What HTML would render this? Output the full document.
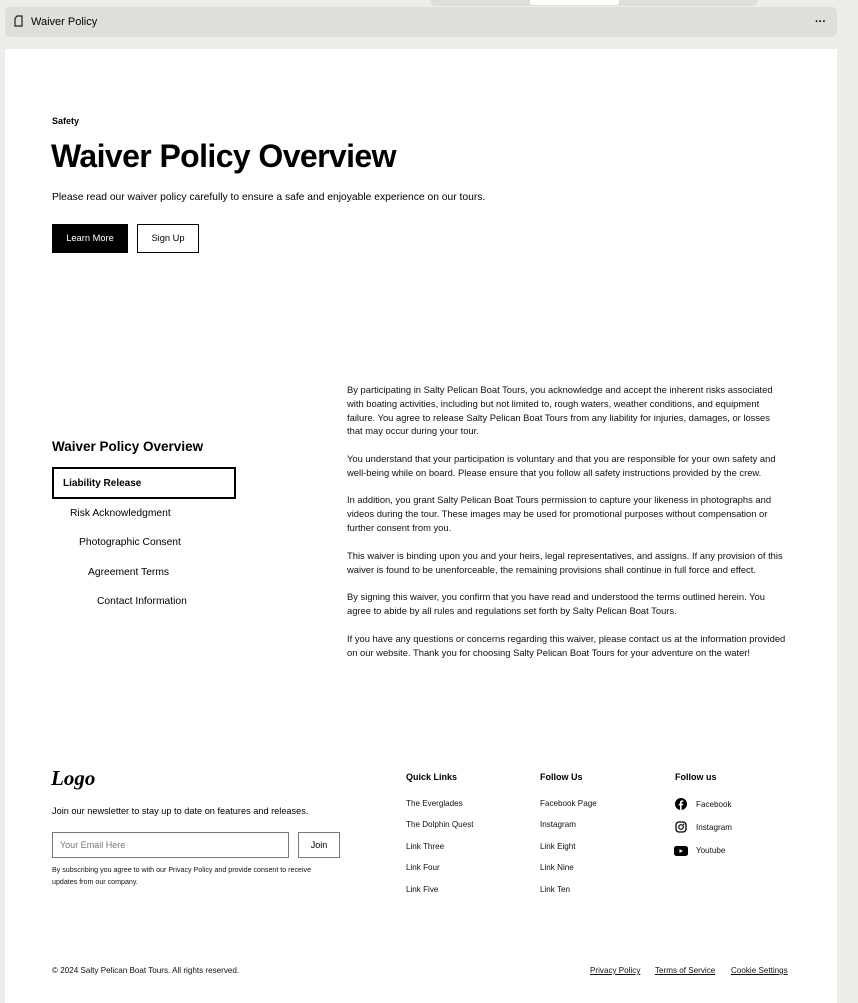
<!DOCTYPE html>
<html><head><meta charset="utf-8"><style>
*{margin:0;padding:0;box-sizing:border-box}
body{width:858px;height:1003px;background:#eeede9;font-family:"Liberation Sans",Arial,sans-serif;color:#000;position:relative;overflow:hidden}
.a{position:absolute;white-space:nowrap}
.bar{position:absolute;left:5px;top:7px;width:832px;height:30px;background:#dfdedb;border-radius:5px}
.tab{position:absolute;left:431px;top:0;width:326px;height:6px;background:#dfdedb;border-radius:0 0 4px 4px}
.tabw{position:absolute;left:530px;top:0;width:89px;height:5px;background:#fff;border-radius:0 0 3px 3px}
.panel{position:absolute;left:5px;top:49px;width:832px;height:954px;background:#fff}
.p{position:absolute;left:347px;width:441px;font-size:9.4px;line-height:13.8px;color:#111}
.f{font-size:8.1px;color:#111}
</style></head><body>
<div class="tab"></div><div class="tabw"></div>
<div class="bar"></div>
<svg class="a" style="left:14px;top:15px" width="9" height="12" viewBox="0 0 9 12"><path d="M3 1h5v10H1V3.5L3 1z" fill="none" stroke="#222" stroke-width="1.2"/></svg>
<div class="a" style="left:31px;top:16px;font-size:11px">Waiver Policy</div>
<div class="a" style="left:815px;top:17px;font-size:11px;font-weight:bold;line-height:11px">···</div>
<div class="panel"></div>

<div class="a" style="left:52px;top:116px;font-size:9px;font-weight:bold">Safety</div>
<div class="a" style="left:51px;top:138px;font-size:32px;font-weight:bold;letter-spacing:-0.6px">Waiver Policy Overview</div>
<div class="a" style="left:52px;top:192px;font-size:10.3px">Please read our waiver policy carefully to ensure a safe and enjoyable experience on our tours.</div>
<div class="a" style="left:52px;top:224px;width:76px;height:29px;background:#000;color:#fff;font-size:9.3px;text-align:center;line-height:29px">Learn More</div>
<div class="a" style="left:137px;top:224px;width:62px;height:29px;border:1px solid #000;font-size:9.3px;text-align:center;line-height:27px">Sign Up</div>

<div class="a" style="left:52px;top:439px;font-size:13.5px;font-weight:bold">Waiver Policy Overview</div>
<div class="a" style="left:52px;top:467px;width:184px;height:32px;border:2px solid #000;font-size:10px;font-weight:bold;line-height:29px;padding-left:9px">Liability Release</div>
<div class="a" style="left:70px;top:508px;font-size:10.3px">Risk Acknowledgment</div>
<div class="a" style="left:79px;top:537px;font-size:10.3px">Photographic Consent</div>
<div class="a" style="left:88px;top:567px;font-size:10.3px">Agreement Terms</div>
<div class="a" style="left:97px;top:596px;font-size:10.3px">Contact Information</div>

<div class="p" style="top:383px">By participating in Salty Pelican Boat Tours, you acknowledge and accept the inherent risks associated with boating activities, including but not limited to, rough waters, weather conditions, and equipment failure. You agree to release Salty Pelican Boat Tours from any liability for injuries, damages, or losses that may occur during your tour.</div>
<div class="p" style="top:452px">You understand that your participation is voluntary and that you are responsible for your own safety and well-being while on board. Please ensure that you follow all safety instructions provided by the crew.</div>
<div class="p" style="top:493px">In addition, you grant Salty Pelican Boat Tours permission to capture your likeness in photographs and videos during the tour. These images may be used for promotional purposes without compensation or further consent from you.</div>
<div class="p" style="top:549px">This waiver is binding upon you and your heirs, legal representatives, and assigns. If any provision of this waiver is found to be unenforceable, the remaining provisions shall continue in full force and effect.</div>
<div class="p" style="top:590px">By signing this waiver, you confirm that you have read and understood the terms outlined herein. You agree to abide by all rules and regulations set forth by Salty Pelican Boat Tours.</div>
<div class="p" style="top:632px">If you have any questions or concerns regarding this waiver, please contact us at the information provided on our website. Thank you for choosing Salty Pelican Boat Tours for your adventure on the water!</div>

<div class="a" style="left:51px;top:766px;font-size:21px;font-style:italic;font-family:'Liberation Serif',serif;font-weight:bold">Logo</div>
<div class="a" style="left:52px;top:806px;font-size:9.2px">Join our newsletter to stay up to date on features and releases.</div>
<div class="a" style="left:52px;top:832px;width:237px;height:26px;border:1px solid #777;font-size:9px;color:#777;line-height:24px;padding-left:7px">Your Email Here</div>
<div class="a" style="left:298px;top:832px;width:42px;height:26px;border:1px solid #777;font-size:9px;text-align:center;line-height:24px">Join</div>
<div class="a f" style="left:52px;top:865px;font-size:7.1px;line-height:11.5px">By subscribing you agree to with our Privacy Policy and provide consent to receive<br>updates from our company.</div>

<div class="a" style="left:406px;top:772px;font-size:9px;font-weight:bold">Quick Links</div>
<div class="a f" style="left:406px;top:799px">The Everglades</div>
<div class="a f" style="left:406px;top:820px">The Dolphin Quest</div>
<div class="a f" style="left:406px;top:842px">Link Three</div>
<div class="a f" style="left:406px;top:863px">Link Four</div>
<div class="a f" style="left:406px;top:885px">Link Five</div>

<div class="a" style="left:540px;top:772px;font-size:9px;font-weight:bold">Follow Us</div>
<div class="a f" style="left:540px;top:799px">Facebook Page</div>
<div class="a f" style="left:540px;top:820px">Instagram</div>
<div class="a f" style="left:540px;top:842px">Link Eight</div>
<div class="a f" style="left:540px;top:863px">Link Nine</div>
<div class="a f" style="left:540px;top:885px">Link Ten</div>

<div class="a" style="left:675px;top:772px;font-size:9px;font-weight:bold">Follow us</div>
<svg class="a" style="left:675px;top:798px" width="12" height="12" viewBox="0 0 12 12"><circle cx="6" cy="6" r="6"/><path d="M6.6 12V7.3h1.4l.3-1.6H6.6v-1c0-.5.2-.8.8-.8h.9V2.5c-.3 0-.8-.1-1.3-.1-1.3 0-2 .8-2 2.1v1.2H3.7v1.6H5V12z" fill="#fff"/></svg>
<div class="a f" style="left:696px;top:800px">Facebook</div>
<svg class="a" style="left:675px;top:821px" width="12" height="12" viewBox="0 0 12 12"><rect x="1" y="1" width="10" height="10" rx="3" fill="none" stroke="#000" stroke-width="1.3"/><circle cx="6" cy="6" r="2.3" fill="none" stroke="#000" stroke-width="1.2"/><circle cx="8.7" cy="3.3" r=".7"/></svg>
<div class="a f" style="left:696px;top:823px">Instagram</div>
<svg class="a" style="left:674px;top:846px" width="14" height="10" viewBox="0 0 14 10"><rect width="14" height="10" rx="2.5"/><path d="M5.5 3v4l3.5-2z" fill="#fff"/></svg>
<div class="a f" style="left:696px;top:846px">Youtube</div>

<div class="a f" style="left:52px;top:966px">© 2024 Salty Pelican Boat Tours. All rights reserved.</div>
<div class="a f" style="left:590px;top:966px;text-decoration:underline">Privacy Policy</div>
<div class="a f" style="left:655px;top:966px;text-decoration:underline">Terms of Service</div>
<div class="a f" style="left:731px;top:966px;text-decoration:underline">Cookie Settings</div>
</body></html>
